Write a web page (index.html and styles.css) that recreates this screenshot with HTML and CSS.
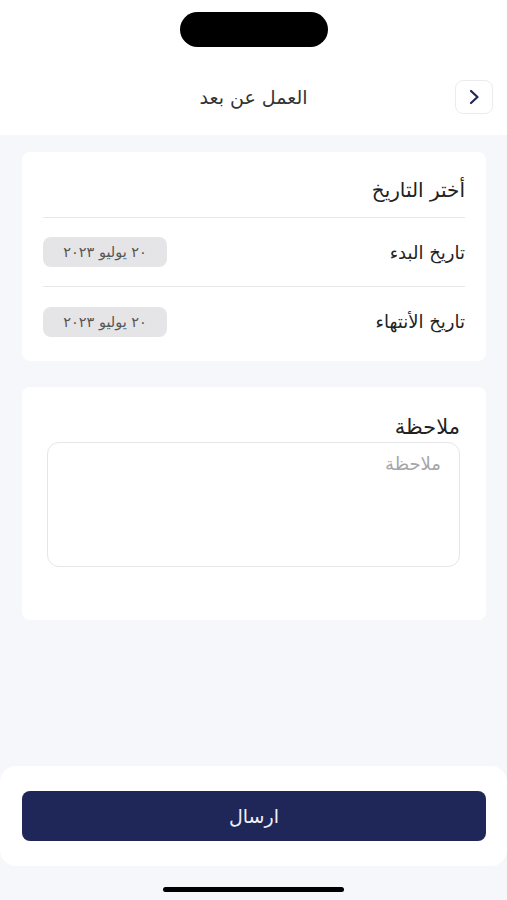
FILE: index.html
```html
<!DOCTYPE html>
<html lang="ar" dir="rtl">
<head>
    <meta charset="UTF-8">
    <meta name="viewport" content="width=device-width, initial-scale=1.0">
    <title>العمل عن بعد</title>
    <link rel="stylesheet" href="styles.css">
</head>
<body>
    <!-- الجزء العلوي -->
    <div class="top">
        <div class="notch"></div>
        <div class="header">
            <button class="back-button" aria-label="رجوع">
                <svg width="14" height="16" viewBox="0 0 14 16">
                    <path d="M4 2 L10.5 8 L4 14" fill="none" stroke="#1f2759" stroke-width="2.2" stroke-linecap="round" stroke-linejoin="round"/>
                </svg>
            </button>
            <span class="header-title">العمل عن بعد</span>
            <span></span>
        </div>
    </div>

    <!-- المحتوى -->
    <main class="main-content">
        <section class="card date-card">
            <h2 class="card-title">أختر التاريخ</h2>
            <div class="date-row">
                <span class="date-label">تاريخ البدء</span>
                <span class="date-chip">٢٠ يوليو ٢٠٢٣</span>
            </div>
            <div class="date-row">
                <span class="date-label">تاريخ الأنتهاء</span>
                <span class="date-chip">٢٠ يوليو ٢٠٢٣</span>
            </div>
        </section>

        <section class="card note-card">
            <label class="note-label" for="note">ملاحظة</label>
            <textarea id="note" class="note-input" placeholder="ملاحظة"></textarea>
        </section>
    </main>

    <!-- زر الارسال -->
    <div class="bottom-sheet">
        <button class="submit-button">ارسال</button>
    </div>

    <div class="home-bar">
        <div class="home-indicator"></div>
    </div>
</body>
</html>
```

FILE: styles.css
```css
* {
    margin: 0;
    padding: 0;
    box-sizing: border-box;
}

body {
    font-family: "DejaVu Sans", "Noto Sans", sans-serif;
    background-color: #f5f7fb;
    color: #222;
    height: 900px;
    display: flex;
    flex-direction: column;
}

/* الجزء العلوي */
.top {
    background-color: #fff;
    padding-top: 12px;
    padding-bottom: 21px;
}

.notch {
    width: 148px;
    height: 35px;
    margin: 0 auto;
    border-radius: 18px;
    background-color: #000;
}

.header {
    display: grid;
    grid-template-columns: 1fr auto 1fr;
    align-items: center;
    margin-top: 33px;
    padding: 0 14px;
    height: 34px;
}

.back-button {
    width: 38px;
    height: 34px;
    background-color: #fff;
    border: 1px solid #ececf0;
    border-radius: 8px;
    display: flex;
    align-items: center;
    justify-content: center;
    cursor: pointer;
}

.header-title {
    font-size: 19px;
    color: #333;
}

/* البطاقات */
.main-content {
    flex: 1;
    padding: 17px 21px 0 22px;
    display: flex;
    flex-direction: column;
    gap: 26px;
}

.card {
    background-color: #fff;
    border-radius: 8px;
}

.date-card {
    padding: 0 21px 5px;
}

.card-title {
    font-size: 20px;
    font-weight: normal;
    height: 66px;
    display: flex;
    align-items: center;
    padding-top: 10px;
    border-bottom: 1px solid #e7e7ea;
    color: #222;
}

.date-row {
    height: 69px;
    display: flex;
    align-items: center;
    justify-content: space-between;
    border-bottom: 1px solid #e7e7ea;
}

.date-row:last-child {
    border-bottom: none;
}

.date-label {
    font-size: 18px;
    color: #222;
}

.date-chip {
    width: 124px;
    height: 30px;
    border-radius: 8px;
    background-color: #e5e5e7;
    color: #555;
    font-size: 14.5px;
    display: flex;
    align-items: center;
    justify-content: center;
}

.note-card {
    height: 233px;
    padding: 26px 26px 0 25px;
    display: flex;
    flex-direction: column;
}

.note-label {
    font-size: 21px;
    color: #222;
    line-height: 28px;
}

.note-input {
    margin-top: 1px;
    height: 125px;
    border: 1px solid #e6e6e9;
    border-radius: 12px;
    padding: 10px 18px;
    font-family: inherit;
    font-size: 18px;
    resize: none;
    outline: none;
}

.note-input::placeholder {
    color: #a5a5aa;
}

/* زر الارسال */
.bottom-sheet {
    background-color: #fff;
    border-radius: 16px;
    padding: 25px 21px 25px 22px;
}

.submit-button {
    width: 100%;
    height: 50px;
    border: none;
    border-radius: 8px;
    background-color: #1f2759;
    color: #eef0f6;
    font-family: inherit;
    font-size: 19px;
    cursor: pointer;
}

.home-bar {
    padding: 21px 0 8px;
}

.home-indicator {
    width: 181px;
    height: 5px;
    margin: 0 auto;
    border-radius: 3px;
    background-color: #000;
}
```
